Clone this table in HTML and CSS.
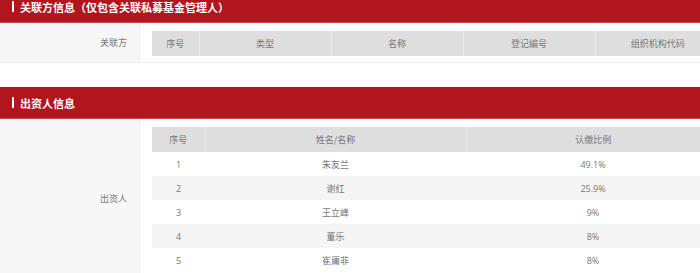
FILE: index.html
```html
<!DOCTYPE html>
<html lang="zh">
<head>
<meta charset="utf-8">
<link rel="stylesheet" href="styles.css">
</head>
<body>
<div class="page">
  <section class="section first">
    <h2 class="title"><span class="bar"></span>关联方信息（仅包含关联私募基金管理人）</h2>
    <div class="row">
      <div class="label">关联方</div>
      <div class="content">
        <table class="grid">
          <colgroup><col class="c1a"><col class="c1b"><col class="c1b"><col class="c1b"><col></colgroup>
          <thead><tr><th>序号</th><th>类型</th><th>名称</th><th>登记编号</th><th>组织机构代码</th></tr></thead>
        </table>
      </div>
    </div>
  </section>
  <section class="section">
    <h2 class="title"><span class="bar"></span>出资人信息</h2>
    <div class="row">
      <div class="label">出资人</div>
      <div class="content">
        <table class="grid">
          <colgroup><col class="c2a"><col class="c2b"><col></colgroup>
          <thead><tr><th>序号</th><th>姓名/名称</th><th>认缴比例</th></tr></thead>
          <tbody>
            <tr><td>1</td><td>朱友兰</td><td>49.1%</td></tr>
            <tr><td>2</td><td>谢红</td><td>25.9%</td></tr>
            <tr><td>3</td><td>王立峰</td><td>9%</td></tr>
            <tr><td>4</td><td>董乐</td><td>8%</td></tr>
            <tr><td>5</td><td>崔庸非</td><td>8%</td></tr>
          </tbody>
        </table>
      </div>
    </div>
  </section>
</div>
</body>
</html>
```

FILE: styles.css
```css
html, body {
  margin: 0;
  padding: 0;
  overflow: hidden;
  background: #ffffff;
}
.page {
  width: 732px;
  font-family: "Open Sans", "Noto Sans CJK SC", sans-serif;
  color: #666666;
}
.section.first {
  margin-top: -9px;
}
.section + .section {
  margin-top: 24px;
}
.title {
  margin: 0;
  height: 32px;
  background: #b3151e;
  border-bottom: 1px solid #c84a50;
  box-sizing: border-box;
  display: flex;
  align-items: center;
  padding-left: 12px;
  color: #ffffff;
  font-family: "Noto Sans CJK SC", sans-serif;
  font-size: 11px;
  font-weight: bold;
}
.bar {
  width: 2px;
  height: 11px;
  background: #ffffff;
  margin-right: 6px;
}
.row {
  display: flex;
  border-bottom: 1px solid #eeeeee;
}
.label {
  width: 140px;
  flex: none;
  background: #f7f7f7;
  border-right: 1px solid #efefef;
  box-sizing: border-box;
  display: flex;
  align-items: center;
  justify-content: flex-end;
  padding-right: 12px;
  font-family: "Noto Sans CJK SC", sans-serif;
  font-size: 9px;
  color: #777777;
}
.content {
  flex: 1;
  padding: 8px 12px 6px 12px;
}
.grid {
  width: 568px;
  border-collapse: collapse;
  table-layout: fixed;
  font-size: 9px;
}
.c1a { width: 47px; }
.c1b { width: 132px; }
.c2a { width: 53px; }
.c2b { width: 261px; }
.grid th {
  height: 25px;
  padding: 0;
  background: #dedede;
  border-left: 1px solid #ebebeb;
  font-weight: normal;
  color: #777777;
  font-family: "Noto Sans CJK SC", sans-serif;
}
.grid th:first-child {
  border-left: none;
}
.grid td {
  height: 24px;
  padding: 0;
  text-align: center;
  color: #777777;
}
.grid tbody tr:nth-child(even) td {
  background: #f5f5f5;
}
```
